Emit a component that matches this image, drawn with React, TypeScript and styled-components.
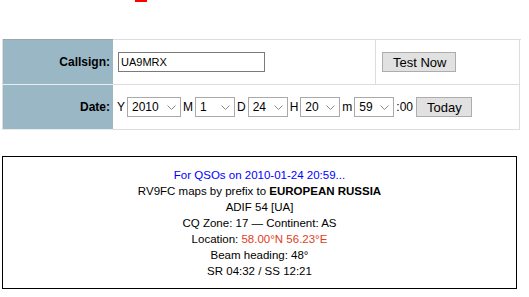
import React from "react";
import styled, { createGlobalStyle } from "styled-components";

const GlobalStyle = createGlobalStyle`
    body {
        margin: 0;
        background: #ffffff;
        font-family: "Liberation Sans", Arial, sans-serif;
        color: #000;
    }
`;

const Page = styled.div`
    padding: 0 0 0 2px;
    width: 527px;
`;

const Mark = styled.div`
    margin-left: 133px;
    width: 12px;
    height: 2px;
    background: #ff0000;
    margin-bottom: 37px;
`;

const FormGrid = styled.div`
    display: grid;
    grid-template-columns: 110px 263px 144px;
    grid-auto-rows: 45px;
    width: 519px;
    border-top: 1px solid #dddddd;
    border-left: 1px solid #dddddd;
    box-sizing: border-box;
`;

const Cell = styled.div<{ $span?: number; $pad?: number }>`
    grid-column: span ${(p) => p.$span || 1};
    display: flex;
    align-items: center;
    border-right: 1px solid #dddddd;
    border-bottom: 1px solid #dddddd;
    padding: 0 0 0 ${(p) => p.$pad ?? 5}px;
    font-size: 12px;
`;

const Label = styled(Cell)<{ $top?: boolean }>`
    justify-content: flex-end;
    background: #9ab7c5;
    font-weight: bold;
    padding: 0 3px 0 0;
    border-right: none;
    border-bottom: 1px solid #e6eef1;
    box-shadow: ${(p) => (p.$top ? "0 -1px 0 #a3a3a3" : "none")};
`;

const TextInput = styled.input`
    width: 147px;
    height: 20px;
    box-sizing: border-box;
    border: 1px solid #7a7a7a;
    padding: 0 2px;
    font-family: "Liberation Sans", Arial, sans-serif;
    font-size: 11px;
    outline: none;
`;

const Button = styled.button<{ $ml?: number }>`
    height: 20px;
    box-sizing: border-box;
    padding: 0 9px 0 10px;
    border: 1px solid #adadad;
    background: #e1e1e1;
    font-family: "Liberation Sans", Arial, sans-serif;
    font-size: 13px;
    color: #000;
    margin-left: ${(p) => p.$ml ?? 0}px;
`;

const SelectWrap = styled.span<{ $w: number }>`
    position: relative;
    display: inline-block;
    width: ${(p) => p.$w}px;
    height: 20px;
    margin: 0 2px;
`;

const NativeSelect = styled.select`
    appearance: none;
    width: 100%;
    height: 100%;
    box-sizing: border-box;
    border: 1px solid #a9a9a9;
    background: #fff;
    padding: 0 0 0 4px;
    font-family: "Liberation Sans", Arial, sans-serif;
    font-size: 12px;
    color: #000;
    border-radius: 0;
    outline: none;
`;

const Chevron = styled.svg`
    position: absolute;
    right: 5px;
    top: 8px;
    pointer-events: none;
`;

const ResultBox = styled.div`
    margin-top: 26px;
    width: 515px;
    box-sizing: border-box;
    border: 1px solid #000;
    padding: 10px 0 9px;
    text-align: center;
    font-size: 11.5px;
    line-height: 16px;
`;

const Line = styled.div<{ $color?: string }>`
    color: ${(p) => p.$color || "#000"};
`;

const Loc = styled.span`
    color: #e0401c;
`;

function Select({ value, width, options }: { value: string; width: number; options: string[] }) {
    return (
        <SelectWrap $w={width}>
            <NativeSelect defaultValue={value}>
                {options.map((o) => (
                    <option key={o} value={o}>{o}</option>
                ))}
            </NativeSelect>
            <Chevron width="9" height="5" viewBox="0 0 9 5">
                <path d="M0.5 0.5 L4.5 4.5 L8.5 0.5" fill="none" stroke="#8a8a8a" strokeWidth="1" />
            </Chevron>
        </SelectWrap>
    );
}

const range = (a: number, b: number, pad = false) =>
    Array.from({ length: b - a + 1 }, (_, i) => (pad ? String(a + i).padStart(2, "0") : String(a + i)));

function App() {
    return (
        <Page>
            <GlobalStyle />
            <Mark />
            <FormGrid>
                <Label $top>Callsign:</Label>
                <Cell>
                    <TextInput defaultValue="UA9MRX" />
                </Cell>
                <Cell $pad={6}>
                    <Button>Test Now</Button>
                </Cell>
                <Label>Date:</Label>
                <Cell $span={2} $pad={4}>
                    Y<Select value="2010" width={54} options={range(2000, 2020)} />
                    M<Select value="1" width={40} options={range(1, 12)} />
                    D<Select value="24" width={40} options={range(1, 31)} />
                    H<Select value="20" width={40} options={range(0, 23, true)} />
                    m<Select value="59" width={40} options={range(0, 59, true)} />
                    :00
                    <Button $ml={3}>Today</Button>
                </Cell>
            </FormGrid>
            <ResultBox>
                <Line $color="#0000ff">For QSOs on 2010-01-24 20:59...</Line>
                <Line>RV9FC maps by prefix to <b>EUROPEAN RUSSIA</b></Line>
                <Line>ADIF 54 [UA]</Line>
                <Line>CQ Zone: 17 — Continent: AS</Line>
                <Line>Location: <Loc>58.00°N 56.23°E</Loc></Line>
                <Line>Beam heading: 48°</Line>
                <Line>SR 04:32 / SS 12:21</Line>
            </ResultBox>
        </Page>
    );
}

export default App;
